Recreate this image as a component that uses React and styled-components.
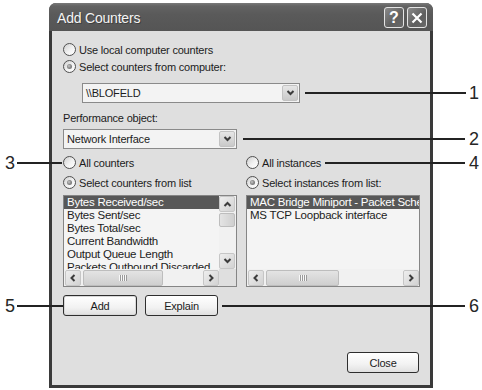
import React from 'react';
import styled, { createGlobalStyle, css } from 'styled-components';

const Global = createGlobalStyle`
  html, body { margin: 0; padding: 0; background: #ffffff; }
  body { font-family: "Liberation Sans", Arial, sans-serif; }
  * { box-sizing: border-box; }
`;

const Stage = styled.div`
  position: relative;
  width: 482px;
  height: 390px;
  overflow: hidden;
  padding: 3px 0 0 49px;
`;

const Window = styled.div`
  width: 384px;
  height: 385px;
  display: flex;
  flex-direction: column;
  background: #3a3a3a;
  border-radius: 7px 7px 0 0;
  overflow: hidden;
`;

const TitleBar = styled.div`
  height: 28px;
  flex: none;
  display: flex;
  align-items: center;
  padding: 1px 6px 0 8px;
  background: linear-gradient(#7a7a7a 0, #636363 3px, #5a5a5a 40%, #555555 100%);
`;

const TitleText = styled.div`
  flex: 1;
  color: #f4f4f4;
  font-size: 14px;
  letter-spacing: -0.2px;
  text-shadow: 1px 1px 0 #3f3f3f;
`;

const TitleButtons = styled.div`
  display: flex;
  gap: 3px;
`;

const TitleBtn = styled.div`
  width: 20px;
  height: 21px;
  border: 1px solid #e4e4e4;
  border-radius: 3px;
  background: linear-gradient(135deg, #8a8a8a, #5f5f5f 60%, #6a6a6a);
  display: flex;
  align-items: center;
  justify-content: center;
  color: #ffffff;
  font-size: 16px;
  font-weight: bold;
`;

const Client = styled.div`
  flex: 1;
  margin: 0 3px 3px 3px;
  background: #dfdfdf;
  padding: 10px 10px 0 11px;
  display: flex;
  flex-direction: column;
  font-size: 11px;
  color: #1c1c1c;
  letter-spacing: -0.2px;
`;

const RadioRow = styled.label`
  display: flex;
  align-items: center;
  gap: 3px;
  height: 17px;
  margin-top: ${p => p.$mt || 0}px;
  white-space: nowrap;
`;

const RadioCircle = styled.span`
  position: relative;
  flex: none;
  width: 13px;
  height: 13px;
  border-radius: 50%;
  border: 1px solid #505050;
  background: linear-gradient(135deg, #cfcfcf 0%, #f2f2f2 55%, #ffffff 100%);
  ${p => p.$checked && css`
    &::after {
      content: '';
      position: absolute;
      left: 3px;
      top: 3px;
      width: 5px;
      height: 5px;
      border-radius: 50%;
      background: radial-gradient(circle at 40% 40%, #c8c8c8 0, #8a8a8a 45%, #6a6a6a 100%);
    }
  `}
`;

const Radio = ({ checked, children, mt }) => (
  <RadioRow $mt={mt}>
    <RadioCircle $checked={checked} />
    <span>{children}</span>
  </RadioRow>
);

const Combo = styled.div`
  width: ${p => p.$w}px;
  height: 20px;
  margin-top: ${p => p.$mt}px;
  margin-left: ${p => p.$ml || 0}px;
  border: 1px solid #8a8a8a;
  background: #f3f3f3;
  display: flex;
  align-items: center;
  padding: 0 1px 0 3px;
`;

const ComboText = styled.div`
  flex: 1;
`;

const DropBtn = styled.div`
  width: 16px;
  height: 16px;
  border-radius: 2px;
  border: 1px solid #c2c2c2;
  background: linear-gradient(#e6e6e6, #c9c9c9);
  display: flex;
  align-items: center;
  justify-content: center;
`;

const Label = styled.div`
  margin-top: 8px;
  height: 14px;
  line-height: 14px;
`;

const Columns = styled.div`
  margin-top: 5px;
  display: grid;
  grid-template-columns: 174px 174px;
  column-gap: 9px;
`;

const Column = styled.div`
  display: flex;
  flex-direction: column;
`;

const ListBox = styled.div`
  margin-top: 4px;
  height: 92px;
  border: 1px solid #858585;
  background: #f4f4f4;
  display: grid;
  grid-template-columns: ${p => (p.$vscroll ? '1fr 17px' : '1fr')};
  grid-template-rows: 1fr 17px;
  overflow: hidden;
`;

const Items = styled.div`
  overflow: hidden;
  font-size: 11.5px;
  letter-spacing: -0.25px;
  padding-top: 0;
`;

const Item = styled.div`
  height: 13px;
  line-height: 13px;
  padding-left: 3px;
  white-space: nowrap;
  color: ${p => (p.$selected ? '#ffffff' : '#1c1c1c')};
  background: ${p => (p.$selected ? '#585858' : 'transparent')};
`;

const VScroll = styled.div`
  display: flex;
  flex-direction: column;
  background: #f1f1f1;
  padding-right: 1px;
`;

const HScroll = styled.div`
  display: flex;
  align-items: center;
  background: #f1f1f1;
  padding: 0 0 0 1px;
  grid-column: 1;
`;

const Corner = styled.div`
  background: #dfdfdf;
`;

const ScrollBtn = styled.div`
  flex: none;
  width: 16px;
  height: 16px;
  border-radius: 2px;
  border: 1px solid #c6c6c6;
  background: linear-gradient(135deg, #eeeeee, #d2d2d2);
  display: flex;
  align-items: center;
  justify-content: center;
`;

const Thumb = styled.div`
  flex: none;
  ${p => (p.$vertical
    ? css`width: 16px; height: ${p.$size}px; margin-top: 1px;`
    : css`height: 16px; width: ${p.$size}px; margin-left: 2px;`)}
  border-radius: 2px;
  border: 1px solid #bdbdbd;
  background: linear-gradient(${p => (p.$vertical ? '90deg' : '180deg')}, #e4e4e4, #cfcfcf);
  display: flex;
  align-items: center;
  justify-content: center;
`;

const Grip = styled.div`
  width: 8px;
  height: 6px;
  background: repeating-linear-gradient(90deg, #f8f8f8 0 1px, #9a9a9a 1px 2px);
`;

const Spacer = styled.div`
  flex: 1;
`;

const ButtonRow = styled.div`
  margin-top: 8px;
  display: flex;
  gap: 8px;
`;

const Button = styled.div`
  width: ${p => p.$w || 73}px;
  height: 21px;
  border: 1px solid #2e2e2e;
  border-radius: 3px;
  background: linear-gradient(#ffffff, #f2f2f2 60%, #e0e0e0);
  display: flex;
  align-items: center;
  justify-content: center;
  ${p => p.$default && css`box-shadow: inset 0 0 0 1px #d8d8d8;`}
`;

const Footer = styled.div`
  margin-top: auto;
  margin-bottom: 12px;
  display: flex;
  justify-content: flex-end;
  padding-right: 1px;
`;

/* callouts: annotations drawn over the screenshot */
const CalloutLine = styled.div`
  position: absolute;
  left: ${p => p.$x1}px;
  width: ${p => p.$x2 - p.$x1}px;
  top: ${p => p.$y - 1}px;
  height: 2px;
  background: #232323;
`;

const CalloutNum = styled.div`
  position: absolute;
  top: ${p => p.$y - 11}px;
  ${p => (p.$side === 'right' ? css`right: 3px;` : css`left: 5px;`)}
  height: 22px;
  line-height: 22px;
  font-family: "Liberation Sans", Arial, sans-serif;
  font-size: 18px;
  color: #262626;
`;

const Chevron = ({ dir }) => {
  const paths = {
    down: 'M1.5 2 L4.5 5 L7.5 2',
    up: 'M1.5 6 L4.5 3 L7.5 6',
    left: 'M5.5 1 L2.5 4 L5.5 7',
    right: 'M2.5 1 L5.5 4 L2.5 7',
  };
  return (
    <svg width="9" height="8" viewBox="0 0 9 8">
      <path d={paths[dir]} fill="none" stroke="#3c3c3c" strokeWidth="2" />
    </svg>
  );
};

const HBar = ({ thumb }) => (
  <HScroll>
    <ScrollBtn><Chevron dir="left" /></ScrollBtn>
    <Thumb $size={thumb}><Grip /></Thumb>
    <Spacer />
    <ScrollBtn><Chevron dir="right" /></ScrollBtn>
  </HScroll>
);

const callouts = [
  { n: '1', y: 93, x1: 305, x2: 466, side: 'right' },
  { n: '2', y: 139, x1: 243, x2: 465, side: 'right' },
  { n: '3', y: 163, x1: 17, x2: 62, side: 'left' },
  { n: '4', y: 163, x1: 325, x2: 465, side: 'right' },
  { n: '5', y: 306, x1: 17, x2: 63, side: 'left' },
  { n: '6', y: 306, x1: 222, x2: 465, side: 'right' },
];

export default function App() {
  return (
    <Stage>
      <Global />
      <Window>
        <TitleBar>
          <TitleText>Add Counters</TitleText>
          <TitleButtons>
            <TitleBtn>?</TitleBtn>
            <TitleBtn>
              <svg width="12" height="12" viewBox="0 0 12 12">
                <path d="M1.5 1.5 L10.5 10.5 M10.5 1.5 L1.5 10.5" stroke="#ffffff" strokeWidth="2.2" />
              </svg>
            </TitleBtn>
          </TitleButtons>
        </TitleBar>
        <Client>
          <Radio>Use local computer counters</Radio>
          <Radio checked>Select counters from computer:</Radio>
          <Combo $w={218} $mt={8} $ml={19}>
            <ComboText>\\BLOFELD</ComboText>
            <DropBtn><Chevron dir="down" /></DropBtn>
          </Combo>
          <Label>Performance object:</Label>
          <Combo $w={174} $mt={4}>
            <ComboText>Network Interface</ComboText>
            <DropBtn><Chevron dir="down" /></DropBtn>
          </Combo>
          <Columns>
            <Column>
              <Radio>All counters</Radio>
              <Radio checked mt={3}>Select counters from list</Radio>
              <ListBox $vscroll>
                <Items>
                  <Item $selected>Bytes Received/sec</Item>
                  <Item>Bytes Sent/sec</Item>
                  <Item>Bytes Total/sec</Item>
                  <Item>Current Bandwidth</Item>
                  <Item>Output Queue Length</Item>
                  <Item>Packets Outbound Discarded</Item>
                </Items>
                <VScroll>
                  <ScrollBtn><Chevron dir="up" /></ScrollBtn>
                  <Thumb $vertical $size={14} />
                  <Spacer />
                  <ScrollBtn><Chevron dir="down" /></ScrollBtn>
                </VScroll>
                <HBar thumb={80} />
                <Corner />
              </ListBox>
            </Column>
            <Column>
              <Radio>All instances</Radio>
              <Radio checked mt={3}>Select instances from list:</Radio>
              <ListBox>
                <Items>
                  <Item $selected>MAC Bridge Miniport - Packet Scheduler Miniport</Item>
                  <Item>MS TCP Loopback interface</Item>
                </Items>
                <HBar thumb={73} />
              </ListBox>
            </Column>
          </Columns>
          <ButtonRow>
            <Button $default $w={74}>Add</Button>
            <Button $w={73}>Explain</Button>
          </ButtonRow>
          <Footer>
            <Button $w={72}>Close</Button>
          </Footer>
        </Client>
      </Window>
      {callouts.map(c => (
        <React.Fragment key={c.n}>
          <CalloutLine $x1={c.x1} $x2={c.x2} $y={c.y} />
          <CalloutNum $y={c.y} $side={c.side}>{c.n}</CalloutNum>
        </React.Fragment>
      ))}
    </Stage>
  );
}
